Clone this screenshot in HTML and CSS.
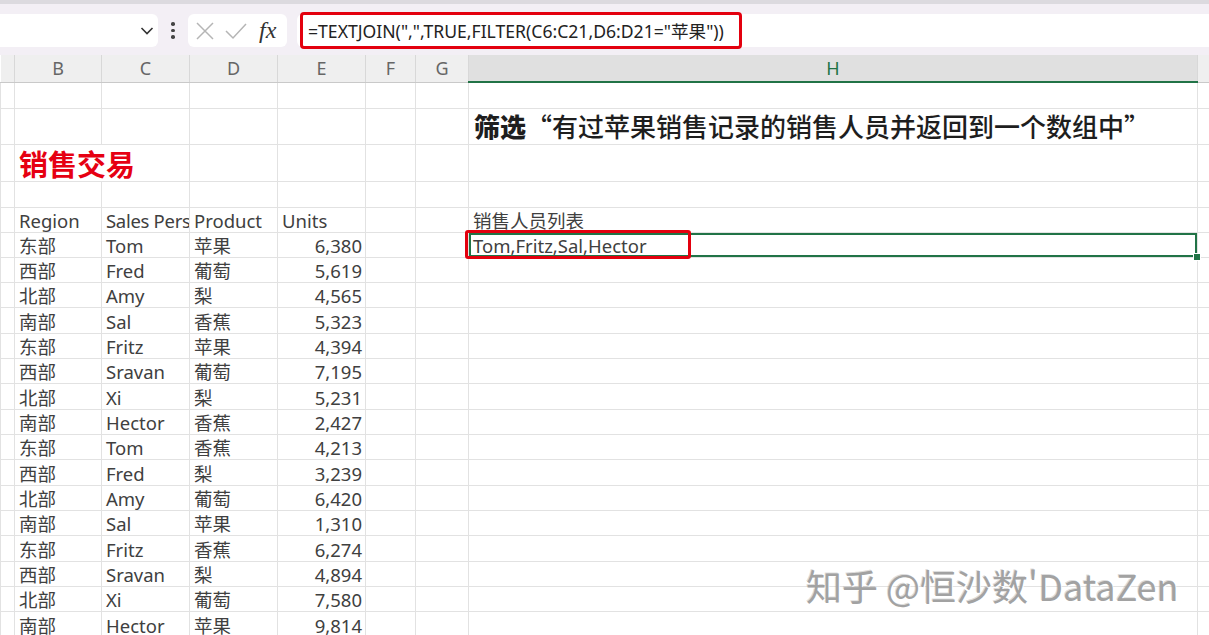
FILE: index.html
```html
<!DOCTYPE html>
<html lang="zh-CN">
<head>
    <meta charset="UTF-8">
    <title>TEXTJOIN FILTER</title>
    <link rel="stylesheet" href="styles.css">
</head>
<body>
    <div class="topstrip"></div>
    <div class="fbar">
        <div class="namebox">
            <svg class="chev" width="14" height="10" viewBox="0 0 14 10"><polyline points="1.5,2 7,7.5 12.5,2" fill="none" stroke="#333" stroke-width="1.6"/></svg>
        </div>
        <div class="dots"><span></span><span></span><span></span></div>
        <div class="fxbox">
            <svg width="22" height="22" viewBox="0 0 22 22"><path d="M3 3 L19 19 M19 3 L3 19" stroke="#b5b5b5" stroke-width="1.5" fill="none"/></svg>
            <svg width="24" height="22" viewBox="0 0 24 22"><polyline points="2,11 9,18 22,4" stroke="#b5b5b5" stroke-width="1.5" fill="none"/></svg>
            <span class="fx">fx</span>
        </div>
        <div class="formula">
            <span class="mark">=TEXTJOIN(",",TRUE,FILTER(C6:C21,D6:D21="苹果"))</span>
        </div>
    </div>

    <table class="sheet">
        <colgroup>
            <col class="ca"><col class="cb"><col class="cc"><col class="cd"><col class="ce"><col class="cf"><col class="cg"><col class="ch"><col class="ci">
        </colgroup>
        <thead>
            <tr>
                <th></th><th>B</th><th>C</th><th>D</th><th>E</th><th>F</th><th>G</th><th class="active">H</th><th></th>
            </tr>
        </thead>
        <tbody>
            <tr class="r26"><td></td><td></td><td></td><td></td><td></td><td></td><td></td><td></td><td></td></tr>
            <tr class="r36"><td></td><td></td><td></td><td></td><td></td><td></td><td></td><td class="heading"><b>筛选</b>“有过苹果销售记录的销售人员并返回到一个数组中”</td><td></td></tr>
            <tr class="r37"><td></td><td colspan="2" class="title">销售交易</td><td></td><td></td><td></td><td></td><td></td><td></td></tr>
            <tr class="r26"><td></td><td></td><td></td><td></td><td></td><td></td><td></td><td></td><td></td></tr>
            <tr class="r24"><td></td><td>Region</td><td class="tight">Sales Pers</td><td>Product</td><td>Units</td><td></td><td></td><td>销售人员列表</td><td></td></tr>
            <tr><td></td><td>东部</td><td>Tom</td><td>苹果</td><td class="num">6,380</td><td></td><td></td><td class="sel"><span class="hl"></span>Tom,Fritz,Sal,Hector</td><td></td></tr>
            <tr><td></td><td>西部</td><td>Fred</td><td>葡萄</td><td class="num">5,619</td><td></td><td></td><td></td><td></td></tr>
            <tr><td></td><td>北部</td><td>Amy</td><td>梨</td><td class="num">4,565</td><td></td><td></td><td></td><td></td></tr>
            <tr><td></td><td>南部</td><td>Sal</td><td>香蕉</td><td class="num">5,323</td><td></td><td></td><td></td><td></td></tr>
            <tr><td></td><td>东部</td><td>Fritz</td><td>苹果</td><td class="num">4,394</td><td></td><td></td><td></td><td></td></tr>
            <tr><td></td><td>西部</td><td>Sravan</td><td>葡萄</td><td class="num">7,195</td><td></td><td></td><td></td><td></td></tr>
            <tr><td></td><td>北部</td><td>Xi</td><td>梨</td><td class="num">5,231</td><td></td><td></td><td></td><td></td></tr>
            <tr><td></td><td>南部</td><td>Hector</td><td>香蕉</td><td class="num">2,427</td><td></td><td></td><td></td><td></td></tr>
            <tr><td></td><td>东部</td><td>Tom</td><td>香蕉</td><td class="num">4,213</td><td></td><td></td><td></td><td></td></tr>
            <tr><td></td><td>西部</td><td>Fred</td><td>梨</td><td class="num">3,239</td><td></td><td></td><td></td><td></td></tr>
            <tr><td></td><td>北部</td><td>Amy</td><td>葡萄</td><td class="num">6,420</td><td></td><td></td><td></td><td></td></tr>
            <tr><td></td><td>南部</td><td>Sal</td><td>苹果</td><td class="num">1,310</td><td></td><td></td><td></td><td></td></tr>
            <tr><td></td><td>东部</td><td>Fritz</td><td>香蕉</td><td class="num">6,274</td><td></td><td></td><td></td><td></td></tr>
            <tr><td></td><td>西部</td><td>Sravan</td><td>梨</td><td class="num">4,894</td><td></td><td></td><td></td><td></td></tr>
            <tr><td></td><td>北部</td><td>Xi</td><td>葡萄</td><td class="num">7,580</td><td></td><td></td><td></td><td></td></tr>
            <tr><td></td><td>南部</td><td>Hector</td><td>苹果</td><td class="num">9,814</td><td></td><td></td><td></td><td></td></tr>
        </tbody>
    </table>

    <div class="watermark">知乎 @恒沙数'DataZen</div>
</body>
</html>
```

FILE: styles.css
```css
html, body {
    margin: 0;
    padding: 0;
    background: #fff;
    overflow: hidden;
}
body {
    font-family: "Noto Sans", "Noto Sans CJK SC", sans-serif;
    color: #404040;
    position: relative;
    width: 1209px;
    height: 635px;
}

/* formula bar */
.topstrip {
    height: 4px;
    background: #dcdadf;
}
.fbar {
    height: 51px;
    box-sizing: border-box;
    padding-top: 10px;
    background: #f3eff5;
    display: flex;
    align-items: flex-start;
}
.namebox {
    width: 168px;
    height: 33px;
    margin-left: -10px;
    background: #fff;
    border-radius: 6px;
    display: flex;
    align-items: center;
    justify-content: flex-end;
    padding-right: 4px;
    box-sizing: border-box;
}
.dots {
    width: 30px;
    height: 33px;
    display: flex;
    flex-direction: column;
    align-items: center;
    justify-content: center;
    gap: 3px;
}
.dots span {
    width: 3.5px;
    height: 3.5px;
    border-radius: 50%;
    background: #444;
}
.fxbox {
    width: 99px;
    height: 33px;
    background: #fff;
    border-radius: 6px;
    display: flex;
    align-items: center;
    padding-left: 6px;
    gap: 8px;
    box-sizing: border-box;
}
.fx {
    font-family: "Liberation Serif", serif;
    font-style: italic;
    font-size: 24px;
    color: #333;
    margin-left: 3px;
}
.formula {
    flex: 1;
    margin-left: 10px;
    margin-right: -10px;
    height: 33px;
    background: #fff;
    border-radius: 6px;
    display: flex;
    align-items: center;
    padding-left: 3px;
}
.mark {
    height: 37px;
    box-sizing: border-box;
    border: 3px solid #e3000e;
    border-radius: 4px;
    padding: 0 15px 0 5px;
    display: flex;
    align-items: center;
    font-size: 17.6px;
    color: #222;
    white-space: nowrap;
}

/* sheet */
.sheet {
    border-collapse: collapse;
    table-layout: fixed;
    width: 1209px;
}
.ca { width: 14px; }
.cb { width: 87px; }
.cc { width: 88px; }
.cd { width: 88px; }
.ce { width: 88px; }
.cf { width: 50px; }
.cg { width: 53px; }
.ch { width: 729px; }
.ci { width: 12px; }

.sheet th {
    height: 26px;
    padding: 0;
    background: #efefef;
    border-right: 1px solid #d8d8d8;
    border-bottom: 1px solid #c9c9c9;
    font-weight: 400;
    font-size: 18px;
    color: #666;
    line-height: 24px;
}
.sheet th.active {
    background: #e0e0e0;
    color: #217346;
    border-bottom: 2px solid #217346;
}
.sheet td {
    height: 25.33px;
    padding: 1px 3px 0 4px;
    border: 1px solid #e2e2e2;
    font-size: 18.5px;
    line-height: 23px;
    white-space: nowrap;
    overflow: hidden;
    box-sizing: border-box;
}
.sheet tr.r24 td { height: 24px; }
.sheet tr.r26 td { height: 26px; }
.sheet tr.r36 td { height: 36px; }
.sheet tr.r37 td { height: 37px; }
.sheet td.num {
    text-align: right;
}
.sheet td.tight {
    padding-right: 0;
    letter-spacing: -0.3px;
}
.sheet td.title {
    font-size: 29px;
    line-height: 36px;
    font-weight: 700;
    color: #e60012;
    font-family: "Noto Sans CJK SC", sans-serif;
    padding-top: 0;
    overflow: visible;
}
.sheet td.heading {
    font-family: "Noto Sans CJK SC", sans-serif;
    font-size: 26px;
    line-height: 34px;
    font-weight: 500;
    color: #1e1e1e;
    padding-left: 5px;
    padding-top: 0;
    overflow: visible;
}
.sheet td.heading b {
    font-weight: 900;
}
.sheet td.sel {
    position: relative;
    overflow: visible;
    box-shadow: inset 0 0 0 2px #217346;
}
.sheet td.sel::after {
    content: "";
    position: absolute;
    right: -4px;
    bottom: -4px;
    width: 6px;
    height: 6px;
    background: #217346;
    border: 1px solid #fff;
}
.hl {
    position: absolute;
    left: -4px;
    top: -3px;
    width: 226px;
    height: 29px;
    box-sizing: border-box;
    border: 3px solid #e3000e;
    border-radius: 3px;
}

.watermark {
    position: absolute;
    left: 806px;
    top: 563px;
    font-family: "Noto Sans CJK SC", sans-serif;
    font-size: 36px;
    line-height: 44px;
    color: #a2a2a2;
    text-shadow: 1px 1px 0 rgba(255, 255, 255, 0.95), -1px -1px 0 rgba(120, 120, 120, 0.25);
    white-space: nowrap;
}
```
